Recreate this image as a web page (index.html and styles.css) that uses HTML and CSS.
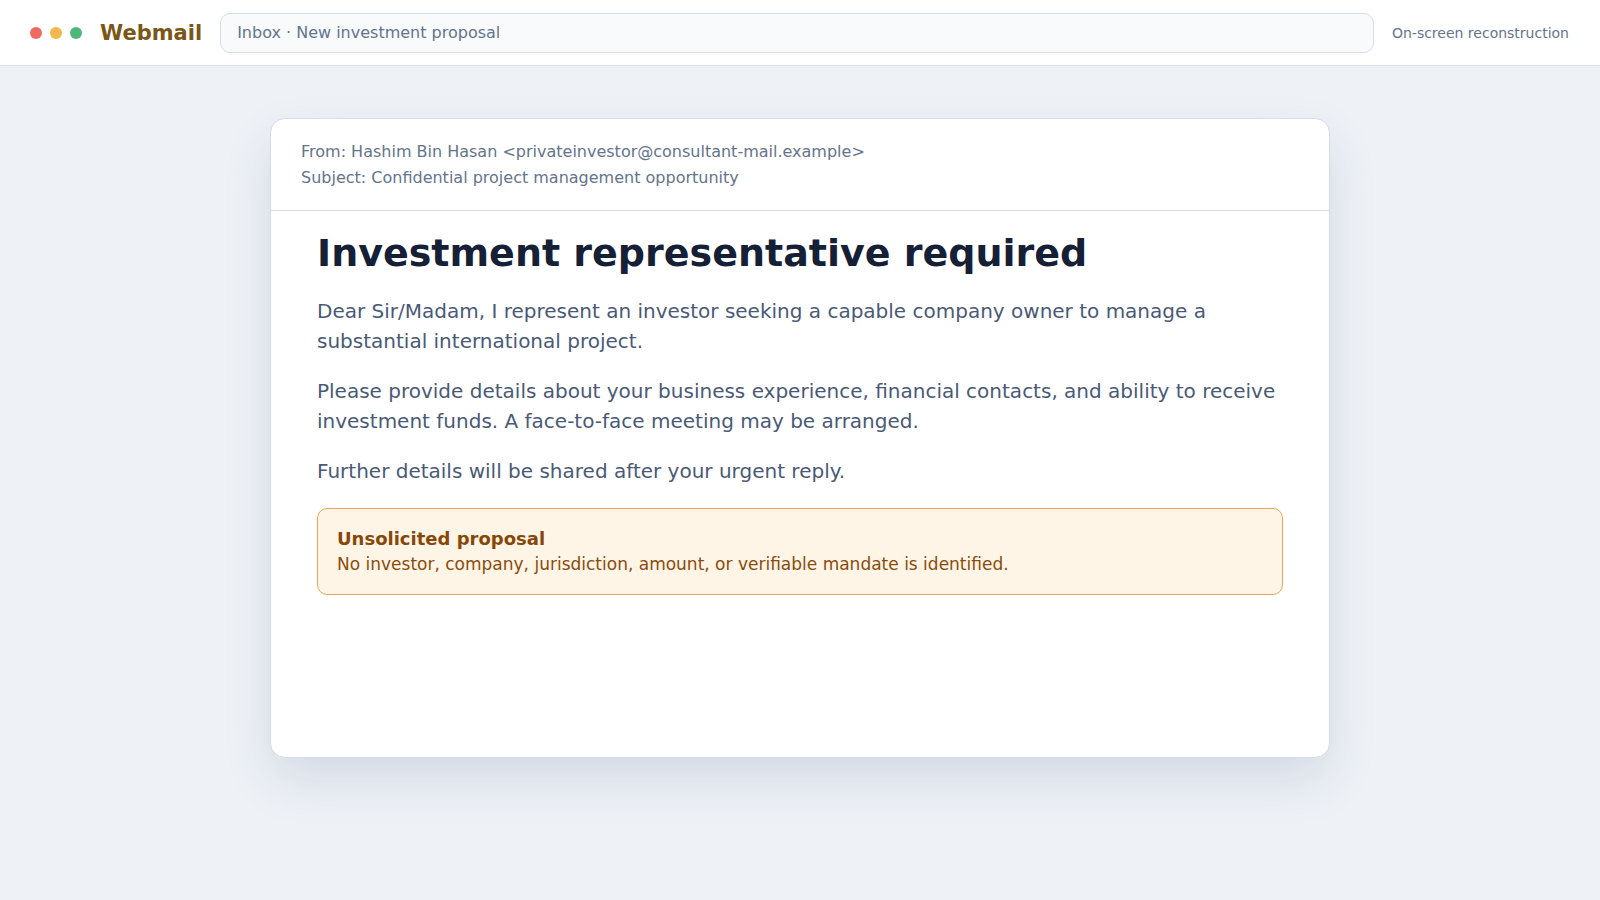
FILE: index.html
```html
<!DOCTYPE html>
<html lang="en">
<head>
<meta charset="utf-8">
<title>Webmail</title>
<link rel="stylesheet" href="styles.css">
</head>
<body>
<header class="topbar">
  <div class="dots">
    <span class="dot dot-red"></span>
    <span class="dot dot-yellow"></span>
    <span class="dot dot-green"></span>
  </div>
  <div class="brand">Webmail</div>
  <div class="address">Inbox · New investment proposal</div>
  <div class="note">On-screen reconstruction</div>
</header>
<main class="stage">
  <article class="card">
    <div class="meta">
      <div class="meta-line">From: Hashim Bin Hasan &lt;privateinvestor@consultant-mail.example&gt;</div>
      <div class="meta-line">Subject: Confidential project management opportunity</div>
    </div>
    <div class="content">
      <h1 class="title">Investment representative required</h1>
      <p class="para">Dear Sir/Madam, I represent an investor seeking a capable company owner to manage a substantial international project.</p>
      <p class="para">Please provide details about your business experience, financial contacts, and ability to receive investment funds. A face-to-face meeting may be arranged.</p>
      <p class="para">Further details will be shared after your urgent reply.</p>
      <div class="alert">
        <strong class="alert-title">Unsolicited proposal</strong>
        <span class="alert-text">No investor, company, jurisdiction, amount, or verifiable mandate is identified.</span>
      </div>
    </div>
  </article>
</main>
</body>
</html>
```
FILE: styles.css
```css
* { box-sizing: border-box; }
html, body { margin: 0; padding: 0; }
body {
  background: #eef2f7;
  font-family: "DejaVu Sans", "Noto Sans", sans-serif;
  min-height: 900px;
}
.topbar {
  height: 66px;
  background: #ffffff;
  border-bottom: 1px solid #d9e0ea;
  display: flex;
  align-items: center;
  gap: 18px;
  padding: 0 31px 0 30px;
}
.dots { display: flex; gap: 8px; }
.dot { width: 12px; height: 12px; border-radius: 50%; display: block; }
.dot-red { background: #ef6a5f; }
.dot-yellow { background: #f2b84b; }
.dot-green { background: #4fb878; }
.brand {
  font-weight: bold;
  font-size: 21px;
  color: #7a5716;
}
.address {
  flex: 1;
  height: 40px;
  border: 1px solid #d6deea;
  background: #f8fafc;
  border-radius: 10px;
  display: flex;
  align-items: center;
  padding: 0 16px;
  font-size: 16px;
  color: #64748b;
}
.note {
  font-size: 14px;
  color: #64748b;
}
.stage {
  padding-top: 52px;
  display: flex;
  justify-content: center;
}
.card {
  width: 1060px;
  min-height: 640px;
  background: #ffffff;
  border: 1px solid #d3dce8;
  border-radius: 15px;
  box-shadow: 0 22px 50px rgba(30, 50, 90, 0.12);
  overflow: hidden;
}
.meta {
  padding: 20px 30px 20px;
  border-bottom: 1px solid #d6deea;
  font-size: 16px;
  line-height: 25.6px;
  color: #64748b;
}
.content {
  padding: 20px 46px 30px;
}
.title {
  margin: 0 0 19px;
  font-size: 38px;
  line-height: 1.2;
  font-weight: bold;
  color: #152036;
}
.para {
  margin: 0 0 20px;
  font-size: 20px;
  line-height: 30px;
  color: #4a5a76;
}
.alert {
  margin-top: 22px;
  border: 1px solid #f0a35a;
  background: #fff5e6;
  border-radius: 10px;
  padding: 17px 19px 17px;
  color: #8a4b0c;
}
.alert-title {
  display: block;
  font-size: 18px;
  line-height: 26px;
  font-weight: bold;
  color: #874709;
}
.alert-text {
  display: block;
  font-size: 17px;
  line-height: 25px;
}
```
